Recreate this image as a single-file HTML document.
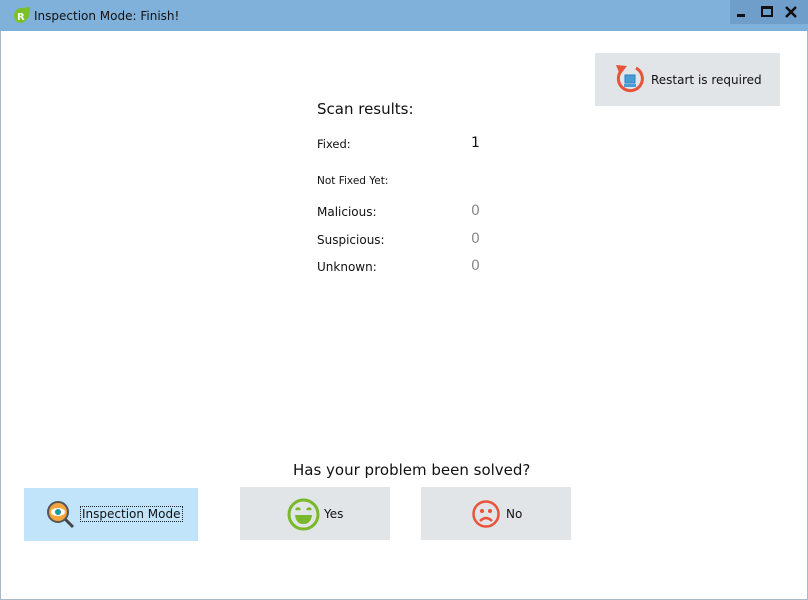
<!DOCTYPE html>
<html><head><meta charset="utf-8"><style>
*{margin:0;padding:0;box-sizing:border-box}
body{width:808px;height:600px;position:relative;background:#fff;font-family:"DejaVu Sans","Liberation Sans",sans-serif;color:#111;overflow:hidden}
.frame{position:absolute;left:0;top:0;width:808px;height:600px;border:1px solid #a9b8c6;border-top:none}
.title{position:absolute;left:0;top:0;width:808px;height:31px;background:#80b1db}
.t{position:absolute;font-size:12px;white-space:nowrap}
.btn{position:absolute;background:#e1e5e8}
</style></head><body>
<div class="frame"></div>
<div class="title">
 <svg style="position:absolute;left:13px;top:6px" width="18" height="18" viewBox="0 0 18 18"><path d="M1 10 Q1 3 8 2 L17 1 Q17 9 15 12 Q12 17 7 17 Q1 16 1 10Z" fill="#7bbf2a"/><text x="4" y="14" font-size="10" font-weight="bold" fill="#fff" font-family="DejaVu Sans">R</text></svg>
 <div class="t" style="left:34px;top:9px;font-size:12px;color:#111">Inspection Mode: Finish!</div>
 <div style="position:absolute;left:730px;top:0;width:78px;height:24px;background:#6f9ecb"></div>
 <div style="position:absolute;left:737px;top:14px;width:8px;height:3px;background:#111"></div>
 <div style="position:absolute;left:761px;top:6px;width:12px;height:11px;border:2px solid #111;border-top-width:3px"></div>
 <svg style="position:absolute;left:785px;top:6px" width="12" height="12" viewBox="0 0 12 12"><path d="M1 1 L11 11 M11 1 L1 11" stroke="#111" stroke-width="2.6"/></svg>
</div>
<div class="btn" style="left:595px;top:53px;width:185px;height:53px">
 <svg style="position:absolute;left:18px;top:9px" width="34" height="34" viewBox="0 0 34 34"><path d="M9 8 A12 12 0 1 0 23 6" fill="none" stroke="#e8533a" stroke-width="3"/><path d="M3 3 L14 4 L7 13Z" fill="#e8533a"/><rect x="12" y="13" width="10" height="8" fill="#4a9cd6" stroke="#2c7fbf" stroke-width="1"/><rect x="11" y="22" width="12" height="3" fill="#4a9cd6"/></svg>
 <div class="t" style="left:56px;top:20px">Restart is required</div>
</div>
<div class="t" style="left:317px;top:100px;font-size:15px">Scan results:</div>
<div class="t" style="left:317px;top:137px;font-size:11.5px">Fixed:</div>
<div class="t" style="left:471px;top:135px;font-size:14px">1</div>
<div class="t" style="left:317px;top:175px;font-size:10.5px">Not Fixed Yet:</div>
<div class="t" style="left:317px;top:205px">Malicious:</div>
<div class="t" style="left:471px;top:203px;font-size:14px;color:#888">0</div>
<div class="t" style="left:317px;top:233px">Suspicious:</div>
<div class="t" style="left:471px;top:231px;font-size:14px;color:#888">0</div>
<div class="t" style="left:317px;top:260px">Unknown:</div>
<div class="t" style="left:471px;top:258px;font-size:14px;color:#888">0</div>
<div class="t" style="left:293px;top:461px;font-size:15px">Has your problem been solved?</div>
<div class="btn" style="left:24px;top:488px;width:174px;height:53px;background:#c2e4fb">
 <svg style="position:absolute;left:22px;top:12px" width="30" height="30" viewBox="0 0 30 30"><line x1="18" y1="18" x2="27" y2="27" stroke="#444" stroke-width="3"/><circle cx="12" cy="12" r="10" fill="#f5a53e" stroke="#555" stroke-width="2"/><ellipse cx="12" cy="12" rx="7" ry="4" fill="#fff"/><circle cx="12" cy="12" r="3" fill="#1a9a9a"/></svg>
 <div class="t" style="left:56px;top:18px;border:1px dotted #222;padding:0 1px">Inspection Mode</div>
</div>
<div class="btn" style="left:240px;top:487px;width:150px;height:53px">
 <svg style="position:absolute;left:47px;top:11px" width="33" height="33" viewBox="0 0 33 33"><circle cx="16.5" cy="16.5" r="14.5" fill="none" stroke="#79b82a" stroke-width="3"/><path d="M9 12 Q11 9 13 12 M20 12 Q22 9 24 12" stroke="#79b82a" stroke-width="2.5" fill="none"/><path d="M8 17 L25 17 Q24 26 16.5 26 Q9 26 8 17Z" fill="#79b82a"/></svg>
 <div class="t" style="left:84px;top:20px">Yes</div>
</div>
<div class="btn" style="left:421px;top:487px;width:150px;height:53px">
 <svg style="position:absolute;left:50px;top:12px" width="30" height="30" viewBox="0 0 30 30"><circle cx="15" cy="15" r="12.5" fill="none" stroke="#e8533a" stroke-width="2.5"/><circle cx="11" cy="12" r="2" fill="#e8533a"/><circle cx="19" cy="12" r="2" fill="#e8533a"/><path d="M9 22 Q15 16 21 22" stroke="#e8533a" stroke-width="2.5" fill="none"/></svg>
 <div class="t" style="left:85px;top:20px">No</div>
</div>
</body></html>
